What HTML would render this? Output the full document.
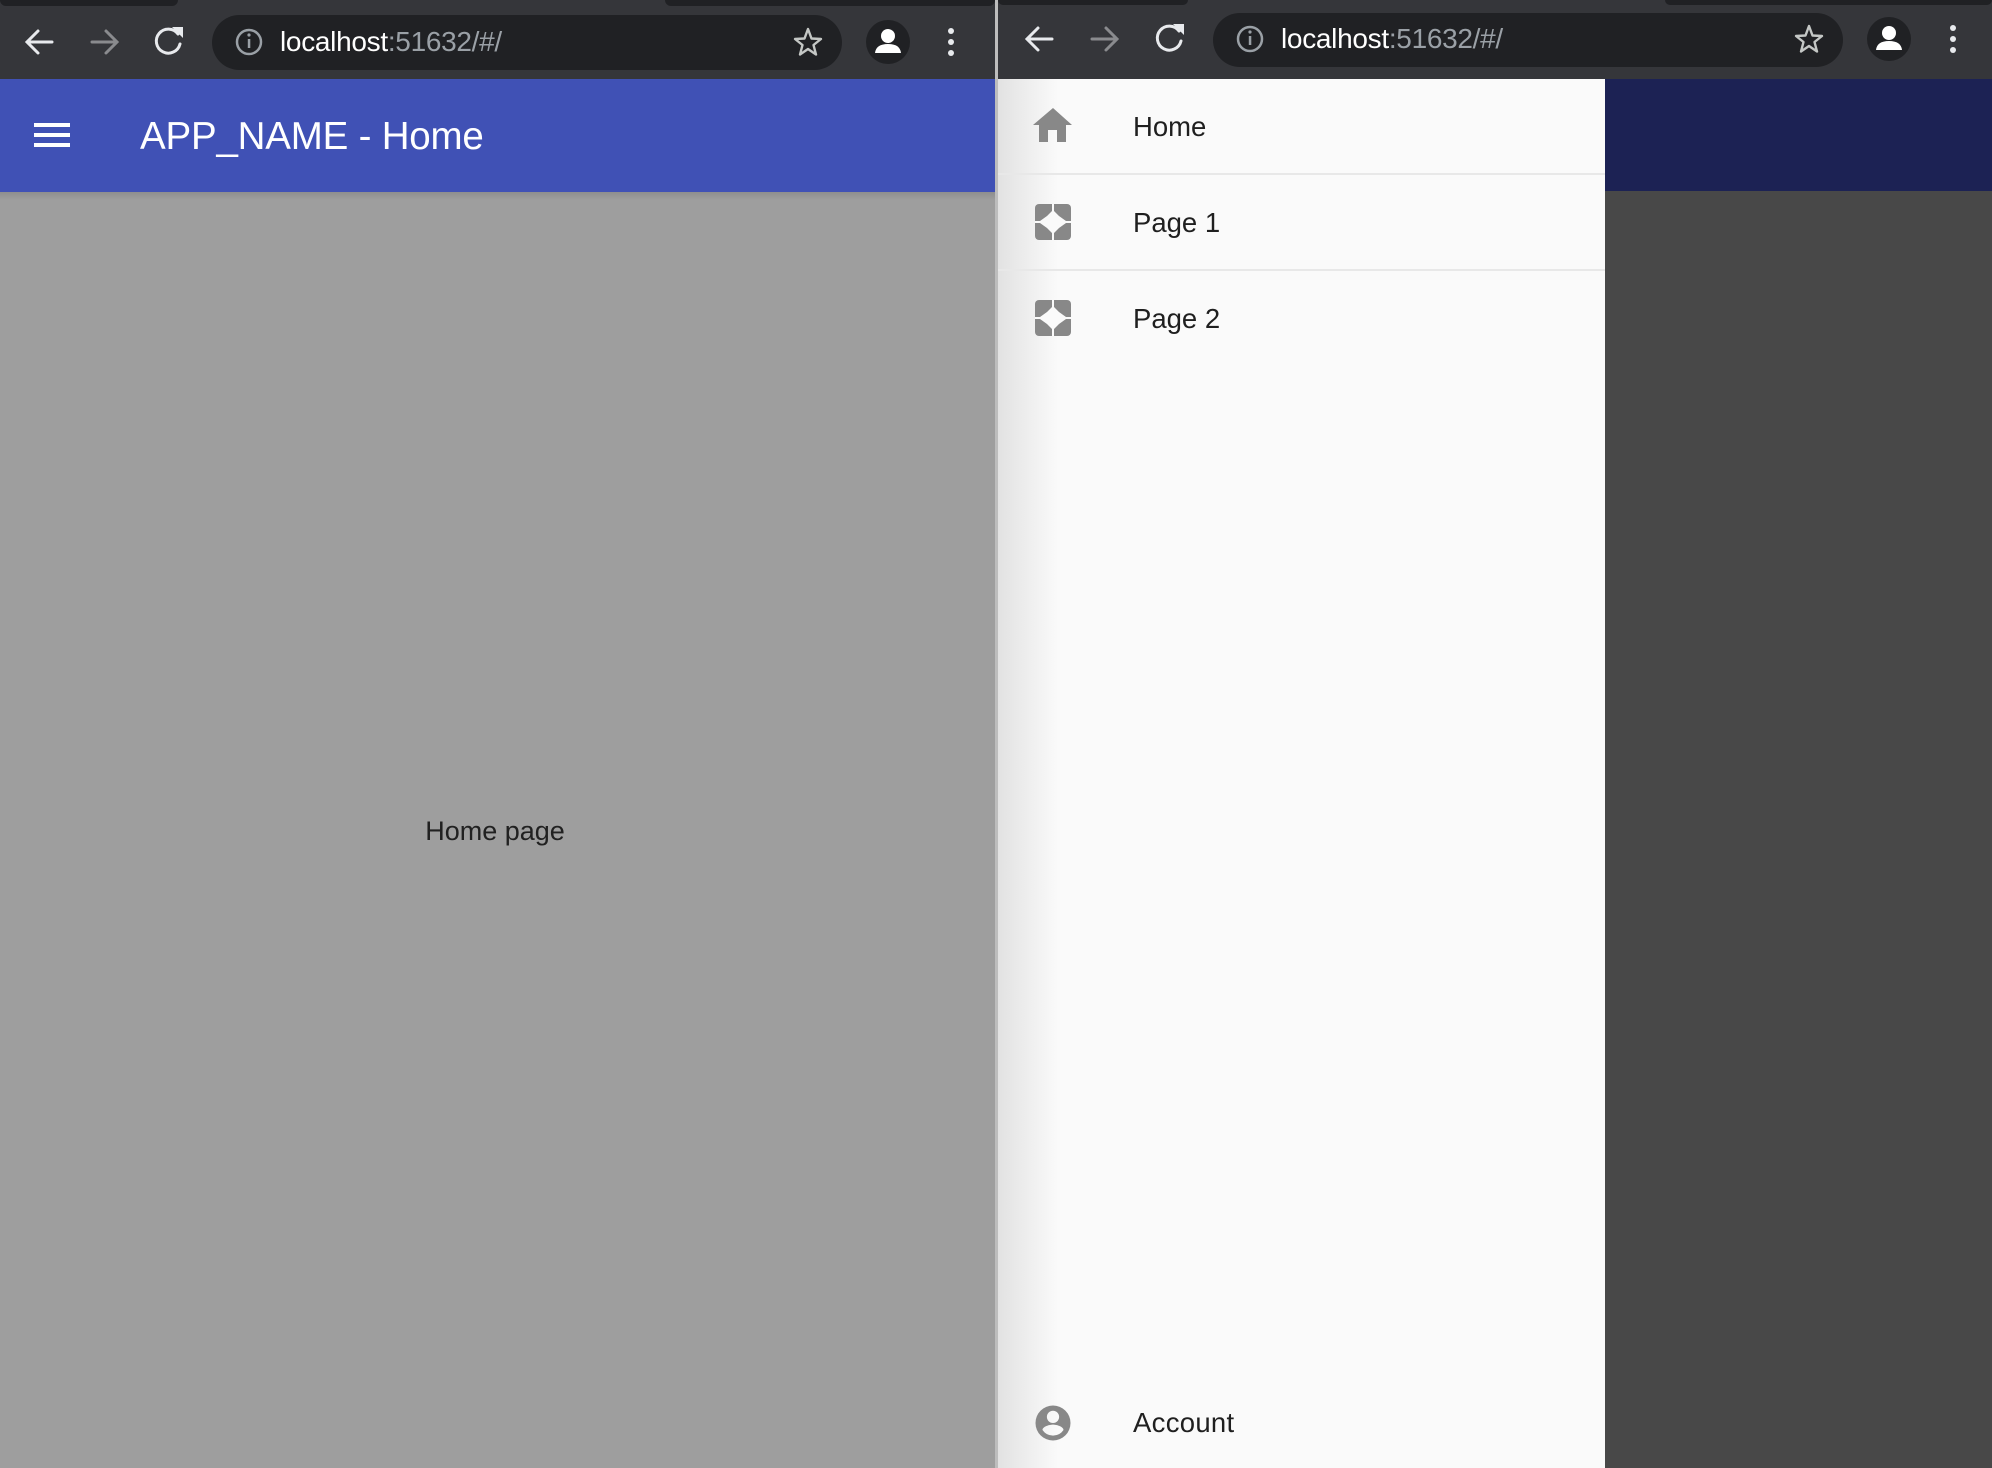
<!DOCTYPE html>
<html><head><meta charset="utf-8"><style>
*{margin:0;padding:0;box-sizing:border-box}
body{width:1992px;height:1468px;overflow:hidden;background:#35363a;font-family:"Liberation Sans",Roboto,sans-serif;position:relative}
.abs{position:absolute}
.pill{position:absolute;background:#202124;border-radius:28px}
.url{position:absolute;color:#fff;font-size:28px;letter-spacing:-0.3px}
.url span{color:#9aa0a6}
.t{position:absolute;left:1133px;font-size:27.5px;color:#1f1f1f}
.div{position:absolute;left:998px;width:607px;height:2px;background:#e8e8e8}
</style></head><body>
<div class="abs" style="left:0;top:0;width:178px;height:6px;background:#202124;border-radius:0 0 10px 10px"></div>
<div class="abs" style="left:665px;top:0;width:330px;height:6px;background:#202124;border-radius:0 0 10px 10px"></div>
<div class="abs" style="left:998px;top:0;width:190px;height:5px;background:#202124;border-radius:0 0 10px 10px"></div>
<div class="abs" style="left:1665px;top:0;width:327px;height:5px;background:#202124;border-radius:0 0 10px 10px"></div>

<svg class="abs" style="left:0;top:0" width="995" height="79">
 <g stroke-width="3" fill="none" stroke-linecap="round">
  <path d="M52 42H28M38 31L27 42L38 53" stroke="#e8eaed"/>
  <path d="M92 42H116M106 31L117 42L106 53" stroke="#8a8b8e"/>
  <path d="M178 34A12 12 0 1 0 180 44" stroke="#e8eaed"/>
 </g>
 <path d="M172 27L183 27L183 38Z" fill="#e8eaed"/>
 <circle cx="888" cy="42" r="22" fill="#202124"/>
 <circle cx="888" cy="36" r="7" fill="#fff"/><path d="M875 53Q876 44 888 44Q900 44 901 53Z" fill="#fff"/>
 <circle cx="951" cy="31" r="3" fill="#e8eaed"/><circle cx="951" cy="42" r="3" fill="#e8eaed"/><circle cx="951" cy="53" r="3" fill="#e8eaed"/>
</svg>
<div class="pill" style="left:212px;top:15px;width:630px;height:55px"></div>
<svg class="abs" style="left:0;top:0" width="995" height="79"><path d="M808 29L811.5 38.5L821 39L813.5 45L816 54.5L808 49L800 54.5L802.5 45L795 39L804.5 38.5Z" fill="none" stroke="#c4c7c5" stroke-width="2.4" stroke-linejoin="round"/><circle cx="249" cy="42" r="12" stroke="#9aa0a6" stroke-width="2.5" fill="none"/><rect x="247.8" y="39" width="2.5" height="9" fill="#9aa0a6"/><circle cx="249" cy="35" r="1.6" fill="#9aa0a6"/></svg>
<div class="url" style="left:280px;top:26px">localhost<span>:51632/#/</span></div>

<div class="abs" style="left:0;top:79px;width:995px;height:113px;background:#4051b5"></div>
<div class="abs" style="left:34px;top:123px;width:36px;height:4px;background:#fff"></div>
<div class="abs" style="left:34px;top:133px;width:36px;height:4px;background:#fff"></div>
<div class="abs" style="left:34px;top:143px;width:36px;height:4px;background:#fff"></div>
<div class="abs" style="left:140px;top:115px;color:#fff;font-size:38.5px;letter-spacing:-0.2px">APP_NAME - Home</div>
<div class="abs" style="left:0;top:192px;width:995px;height:1276px;background:#9e9e9e"></div>
<div class="abs" style="left:0;top:192px;width:995px;height:8px;background:linear-gradient(#8e8e8e,#9e9e9e)"></div>
<div class="abs" style="left:0;top:816px;width:990px;text-align:center;font-size:27px;color:#212121">Home page</div>
<div class="abs" style="left:995px;top:0;width:3px;height:1468px;background:#bdbdbd"></div>

<svg class="abs" style="left:998px;top:0" width="994" height="79">
 <g stroke-width="3" fill="none" stroke-linecap="round">
  <path d="M54 39H30M40 28L29 39L40 50" stroke="#e8eaed"/>
  <path d="M94 39H118M108 28L119 39L108 50" stroke="#8a8b8e"/>
  <path d="M181 31A12 12 0 1 0 183 41" stroke="#e8eaed"/>
 </g>
 <path d="M175 24L186 24L186 35Z" fill="#e8eaed"/>
 <circle cx="891" cy="39" r="22" fill="#202124"/>
 <circle cx="891" cy="33" r="7" fill="#fff"/><path d="M878 50Q879 41 891 41Q903 41 904 50Z" fill="#fff"/>
 <circle cx="955" cy="28" r="3" fill="#e8eaed"/><circle cx="955" cy="39" r="3" fill="#e8eaed"/><circle cx="955" cy="50" r="3" fill="#e8eaed"/>
</svg>
<div class="pill" style="left:1213px;top:13px;width:630px;height:54px"></div>
<svg class="abs" style="left:998px;top:0" width="994" height="79"><path d="M811 26L814.5 35.5L824 36L816.5 42L819 51.5L811 46L803 51.5L805.5 42L798 36L807.5 35.5Z" fill="none" stroke="#c4c7c5" stroke-width="2.4" stroke-linejoin="round"/><circle cx="252" cy="39" r="12" stroke="#9aa0a6" stroke-width="2.5" fill="none"/><rect x="250.8" y="36" width="2.5" height="9" fill="#9aa0a6"/><circle cx="252" cy="32" r="1.6" fill="#9aa0a6"/></svg>
<div class="url" style="left:1281px;top:23px">localhost<span>:51632/#/</span></div>

<div class="abs" style="left:1605px;top:79px;width:387px;height:112px;background:#1c2254"></div>
<div class="abs" style="left:1605px;top:191px;width:387px;height:1277px;background:#484848"></div>
<div class="abs" style="left:998px;top:79px;width:607px;height:1389px;background:#fafafa"></div>
<div class="abs" style="left:998px;top:79px;width:60px;height:1389px;background:linear-gradient(90deg,#e2e2e2,rgba(250,250,250,0))"></div>

<svg class="abs" style="left:0;top:0" width="1992" height="1468">
 <path d="M1053 108L1072 125H1066V142H1057V130H1048V142H1039V125H1033Z" fill="#888"/>
 <g transform="translate(1035,204)">
  <rect width="36" height="36" rx="4" fill="#888"/>
  <path d="M17 0H19V7L24 12L31 17H36V19H31L24 24L19 29V36H17V29L12 24L5 19H0V17H5L12 12L17 7Z" fill="#fafafa"/>
 </g>
 <g transform="translate(1035,300)">
  <rect width="36" height="36" rx="4" fill="#888"/>
  <path d="M17 0H19V7L24 12L31 17H36V19H31L24 24L19 29V36H17V29L12 24L5 19H0V17H5L12 12L17 7Z" fill="#fafafa"/>
 </g>
 <g transform="translate(1032,1402) scale(1.75)"><path d="M12 2a10 10 0 1 0 0 20 10 10 0 0 0 0-20zm0 3a3.5 3.5 0 1 1 0 7 3.5 3.5 0 0 1 0-7zm0 14.2a7.2 7.2 0 0 1-6-3.2c0-2 4-3.1 6-3.1s6 1.1 6 3.1a7.2 7.2 0 0 1-6 3.2z" fill="#888"/></g>
</svg>

<div class="t" style="top:111px">Home</div>
<div class="div" style="top:173px"></div>
<div class="t" style="top:207px">Page 1</div>
<div class="div" style="top:269px"></div>
<div class="t" style="top:303px">Page 2</div>
<div class="t" style="top:1407px;letter-spacing:0.3px">Account</div>
</body></html>
